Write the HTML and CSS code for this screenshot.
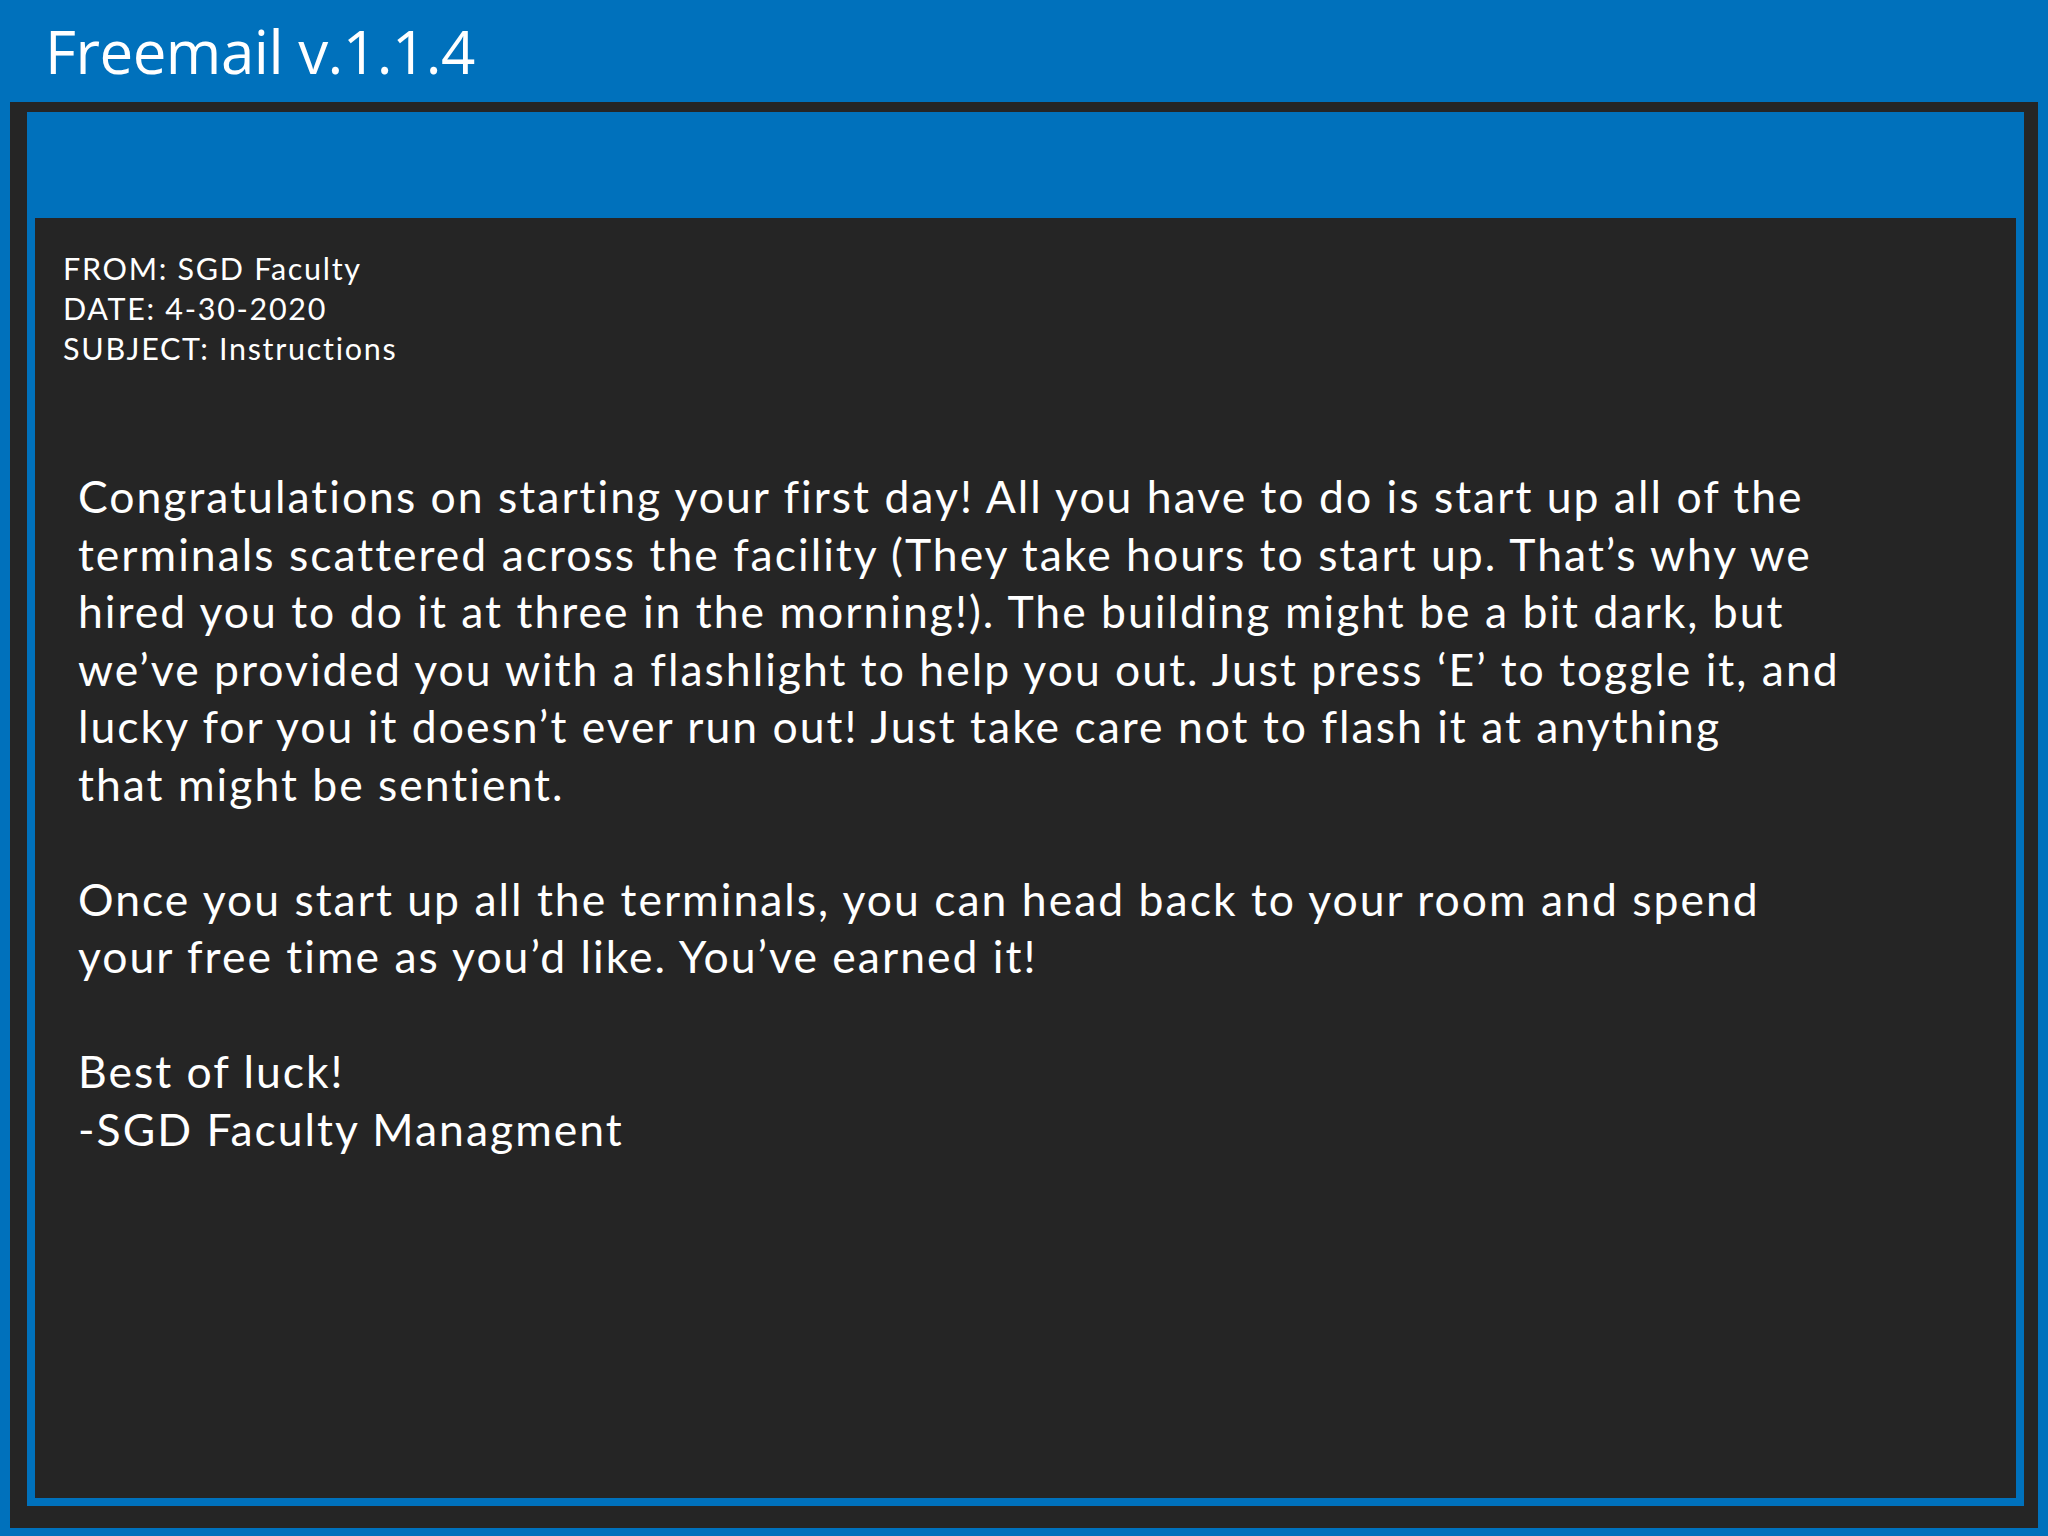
FILE: index.html
```html
<!DOCTYPE html>
<html>
<head>
<meta charset="utf-8">
<link rel="stylesheet" href="styles.css">
</head>
<body>
<header class="app-bar"><h1 class="app-title">Freemail v.1.1.4</h1></header>
<main class="frame">
  <section class="panel">
    <div class="panel-top"></div>
    <article class="mail">
      <div class="meta">
        <div>FROM: SGD Faculty</div>
        <div>DATE: 4-30-2020</div>
        <div>SUBJECT: Instructions</div>
      </div>
      <div class="body">
        <p>Congratulations on starting your first day! All you have to do is start up all of the<br>terminals scattered across the facility (They take hours to start up. That’s why we<br>hired you to do it at three in the morning!). The building might be a bit dark, but<br>we’ve provided you with a flashlight to help you out. Just press ‘E’ to toggle it, and<br>lucky for you it doesn’t ever run out! Just take care not to flash it at anything<br>that might be sentient.</p>
        <p>Once you start up all the terminals, you can head back to your room and spend<br>your free time as you’d like. You’ve earned it!</p>
        <p>Best of luck!<br>-SGD Faculty Managment</p>
      </div>
    </article>
  </section>
</main>
</body>
</html>
```
FILE: styles.css
```css
html, body {
  margin: 0;
  padding: 0;
}
body {
  background: #0071bc;
  width: 2048px;
  height: 1536px;
  overflow: hidden;
  display: flex;
  flex-direction: column;
  font-family: "Lato", "Open Sans", sans-serif;
  color: #ffffff;
}
.app-bar {
  height: 102px;
  padding-left: 45px;
  box-sizing: border-box;
  flex: none;
}
.app-title {
  margin: 0;
  font-family: "Open Sans", sans-serif;
  font-weight: 400;
  font-size: 60px;
  line-height: 102px;
  letter-spacing: -0.5px;
}
.frame {
  flex: 1;
  margin: 0 10px 8px 10px;
  background: #252525;
  padding: 10px 14px 22px 17px;
  display: flex;
}
.panel {
  flex: 1;
  background: #0071bc;
  padding: 0 8px 8px 8px;
  display: flex;
  flex-direction: column;
}
.panel-top {
  height: 106px;
  flex: none;
}
.mail {
  flex: 1;
  background: #252525;
  padding: 30px 0 0 28px;
}
.meta {
  font-size: 30.5px;
  line-height: 40px;
  letter-spacing: 1.7px;
}
.body {
  margin-top: 99px;
  padding-left: 15px;
  font-size: 44.5px;
  line-height: 57.5px;
  letter-spacing: 2px;
}
.body p {
  margin: 0 0 57.5px 0;
}
```
